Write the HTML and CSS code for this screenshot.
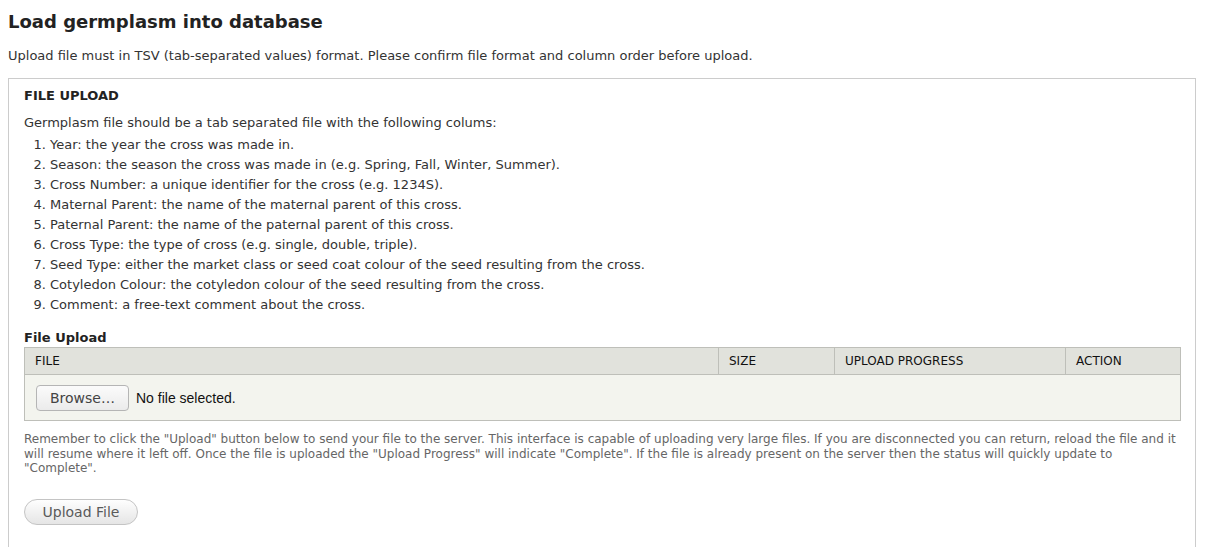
FILE: index.html
```html
<!DOCTYPE html>
<html>
<head>
<meta charset="utf-8">
<link rel="stylesheet" href="styles.css">
</head>
<body>
<h1 class="page-title">Load germplasm into database</h1>
<p class="intro">Upload file must in TSV (tab-separated values) format. Please confirm file format and column order before upload.</p>
<fieldset class="upload-fieldset">
  <div class="legend">FILE UPLOAD</div>
  <p class="lead">Germplasm file should be a tab separated file with the following colums:</p>
  <ol class="columns">
    <li>Year: the year the cross was made in.</li>
    <li>Season: the season the cross was made in (e.g. Spring, Fall, Winter, Summer).</li>
    <li>Cross Number: a unique identifier for the cross (e.g. 1234S).</li>
    <li>Maternal Parent: the name of the maternal parent of this cross.</li>
    <li>Paternal Parent: the name of the paternal parent of this cross.</li>
    <li>Cross Type: the type of cross (e.g. single, double, triple).</li>
    <li>Seed Type: either the market class or seed coat colour of the seed resulting from the cross.</li>
    <li>Cotyledon Colour: the cotyledon colour of the seed resulting from the cross.</li>
    <li>Comment: a free-text comment about the cross.</li>
  </ol>
  <div class="field-label">File Upload</div>
  <table class="upload-table">
    <thead>
      <tr>
        <th class="col-file">FILE</th>
        <th class="col-size">SIZE</th>
        <th class="col-progress">UPLOAD PROGRESS</th>
        <th class="col-action">ACTION</th>
      </tr>
    </thead>
    <tbody>
      <tr>
        <td colspan="4" class="file-cell">
          <div class="file-input">
            <button type="button" class="browse">Browse…</button>
            <span class="no-file">No file selected.</span>
          </div>
        </td>
      </tr>
    </tbody>
  </table>
  <div class="description">Remember to click the "Upload" button below to send your file to the server. This interface is capable of uploading very large files. If you are disconnected you can return, reload the file and it will resume where it left off. Once the file is uploaded the "Upload Progress" will indicate "Complete". If the file is already present on the server then the status will quickly update to "Complete".</div>
  <button type="button" class="upload-btn">Upload File</button>
</fieldset>
</body>
</html>
```
FILE: styles.css
```css
html, body {
  margin: 0;
  padding: 0;
  background: #fff;
}
body {
  padding: 0 8px;
  font-family: "DejaVu Sans", sans-serif;
  font-size: 13px;
  color: #333;
}
.page-title {
  margin: 0;
  padding-top: 10px;
  font-size: 18px;
  line-height: 24px;
  font-weight: bold;
  color: #222;
}
.intro {
  margin: 14px 0 0;
  line-height: 16px;
  color: #333;
}
.upload-fieldset {
  margin: 14px 2px 0 0;
  padding: 10px 14px 30px 15px;
  border: 1px solid #ccc;
  border-bottom: none;
  min-inline-size: 0;
}
.legend {
  font-weight: bold;
  text-transform: uppercase;
  line-height: 14px;
  color: #222;
}
.lead {
  margin: 12px 0 0;
  line-height: 16px;
}
.columns {
  margin: 4px 0 0;
  padding-left: 26px;
}
.columns li {
  line-height: 20px;
  padding-left: 0;
}
.field-label {
  margin-top: 16px;
  font-weight: bold;
  line-height: 14px;
  color: #222;
}
.upload-table {
  margin-top: 2px;
  width: 100%;
  border-collapse: collapse;
  border: 1px solid #bebfb9;
}
.upload-table th {
  background: #e1e2dc;
  border: 1px solid #bebfb9;
  font-family: "DejaVu Sans", sans-serif;
  font-weight: normal;
  font-size: 12px;
  text-align: left;
  padding: 0 10px;
  height: 26px;
  color: #111;
}
.col-file { width: 673px; }
.col-size { width: 95px; }
.col-progress { width: 210px; }
.upload-table td {
  background: #f3f4ee;
  padding: 10px 11px 9px;
}
.file-input {
  display: flex;
  align-items: center;
  gap: 7px;
}
.browse {
  height: 26px;
  width: 93px;
  padding: 0;
  border: 1px solid #b5b5b5;
  border-radius: 4px;
  background: linear-gradient(#fbfbfb, #ebebeb);
  font-family: "DejaVu Sans", sans-serif;
  font-size: 14px;
  color: #444;
}
.no-file {
  font-family: "Liberation Sans", Arial, sans-serif;
  font-size: 14px;
  color: #111;
}
.description {
  margin-top: 11px;
  font-family: "DejaVu Sans", sans-serif;
  font-size: 12px;
  line-height: 14.5px;
  color: #666;
}
.upload-btn {
  display: block;
  margin-top: 23px;
  width: 114px;
  height: 26px;
  padding: 0;
  border: 1px solid #c4c4c4;
  border-radius: 20px;
  background: linear-gradient(#fefefe, #e5e5e5);
  font-family: "DejaVu Sans", sans-serif;
  font-size: 14px;
  color: #5a5a5a;
}
```
